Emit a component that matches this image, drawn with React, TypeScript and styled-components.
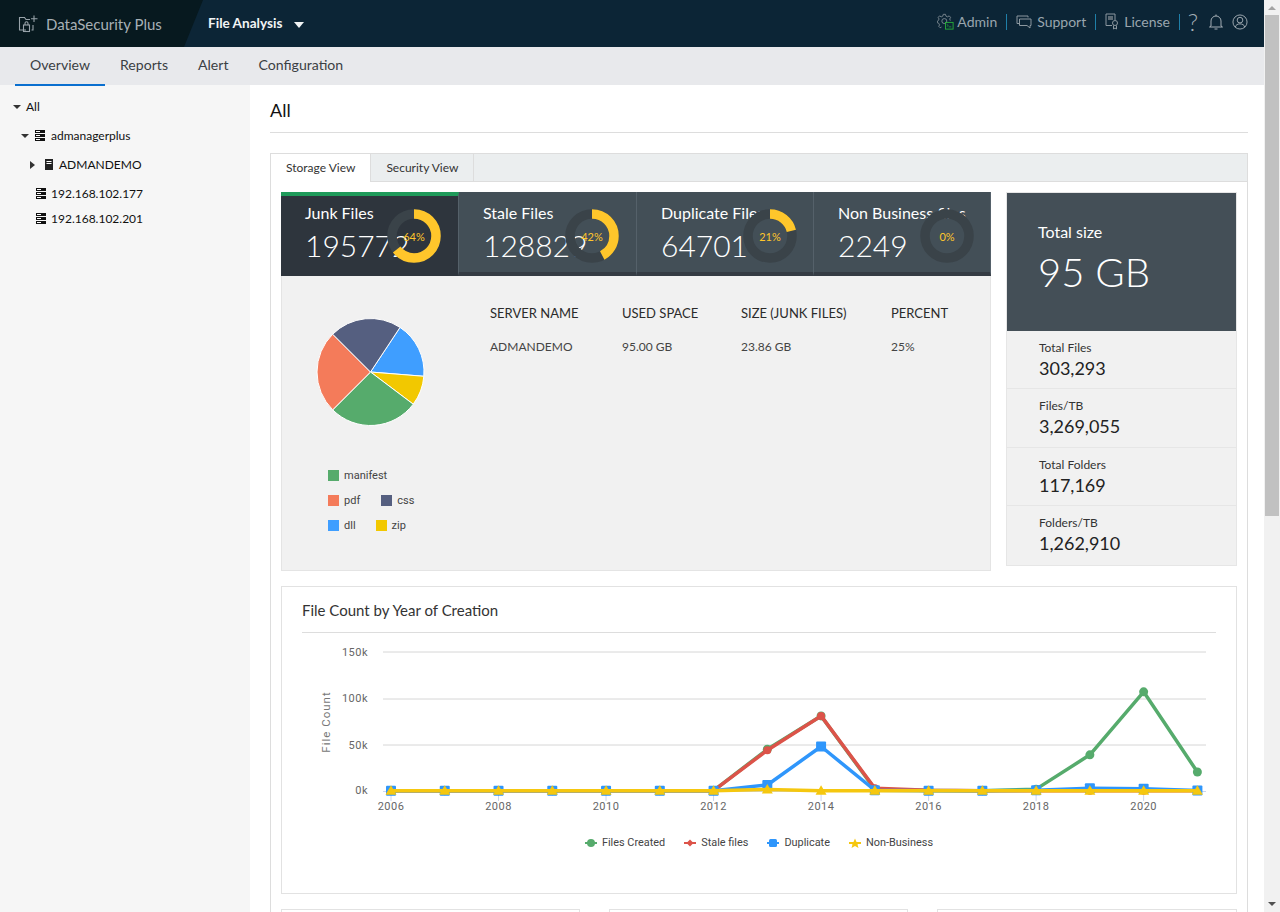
import React from 'react'
import styled, { createGlobalStyle } from 'styled-components'

const GlobalStyle = createGlobalStyle`
	html, body {
		margin: 0;
		height: 100%;
		overflow: hidden;
	}
	body {
		font-family: Lato, 'Liberation Sans', sans-serif;
		color: #222;
	}
	#root {
		height: 912px;
	}
`

const years = Array.from({ length: 16 }, (_, i) => 2006 + i)
const flat = (n: number) => Array.from({ length: n }, () => 0.4)

const series = [
	{ key: 'green', color: '#56ab6c', marker: 'circle', values: [...flat(7), 45, 81, 2, 0.6, 0.4, 2, 39, 107, 20.5] },
	{ key: 'red', color: '#dc5349', marker: 'diamond', values: [...flat(7), 44, 81, 3, 0.8, 0.4, 0.4, 0.4, 0.4, 0.4] },
	{ key: 'blue', color: '#2f96fb', marker: 'square', values: [...flat(7), 6.5, 48, 0.8, 0.4, 0.4, 0.8, 3, 2.4, 0.6] },
	{ key: 'yellow', color: '#f5c70f', marker: 'triangle', values: [...flat(7), 1.6, 0.2, 0.2, 0.3, 0.3, 0.3, 0.3, 0.3, 0.3] },
]

const xAt = (i: number) => 391 + i * 53.76
const yAt = (v: number) => 791 - v * 0.927

const stats = [
	{ title: 'Junk Files', count: '195772', percent: 64, active: true },
	{ title: 'Stale Files', count: '128829', percent: 42, active: false },
	{ title: 'Duplicate Files', count: '64701', percent: 21, active: false },
	{ title: 'Non Business files', count: '2249', percent: 0, active: false },
]

const totals = [
	{ label: 'Total Files', value: '303,293' },
	{ label: 'Files/TB', value: '3,269,055' },
	{ label: 'Total Folders', value: '117,169' },
	{ label: 'Folders/TB', value: '1,262,910' },
]

const pieSlices = [
	{ color: '#3f9eff', from: 33.5, to: 94.6 },
	{ color: '#f2c800', from: 94.6, to: 127 },
	{ color: '#56ab6c', from: 127, to: 225 },
	{ color: '#f47b5a', from: 225, to: 315 },
	{ color: '#555f80', from: 315, to: 393.5 },
]

const piePath = (from: number, to: number) => {
	const point = (deg: number) => {
		const rad = (deg * Math.PI) / 180
		return `${60.5 + 53.5 * Math.sin(rad)} ${60 - 53.5 * Math.cos(rad)}`
	}
	return `M60.5 60 L${point(from)} A53.5 53.5 0 ${to - from > 180 ? 1 : 0} 1 ${point(to)} Z`
}

function Marker({ kind, color, x, y }: { kind: string; color: string; x: number; y: number }) {
	if (kind === 'circle') return <circle cx={x} cy={y} r={4.5} fill={color} />
	if (kind === 'diamond') return <circle cx={x} cy={y} r={4} fill={color} />
	if (kind === 'square') return <rect x={x - 5} y={y - 5} width={10} height={10} rx={1} fill={color} />
	return <path d={`M${x} ${y - 5.5}L${x + 5.5} ${y + 4}H${x - 5.5}Z`} fill={color} />
}

function LegendMark({ kind, color }: { kind: string; color: string }) {
	return (
		<svg width="12" height="12" viewBox="0 0 12 12">
			<rect x="0" y="5" width="12" height="2" fill={color} />
			{kind === 'diamond' ? (
				<path d="M6 2.5L9.5 6L6 9.500L2.500 6Z" fill={color} />
			) : kind === 'star' ? (
				<path d="M6 1.500L7.500 5H11.500L8.500 7.500L9.500 11L6 9L2.500 11L3.500 7.500L0.500 5H4.500Z" fill={color} />
			) : kind === 'square' ? (
				<rect x="2" y="2" width="8" height="8" rx="1.500" fill={color} />
			) : (
				<circle cx="6" cy="6" r="4" fill={color} />
			)}
		</svg>
	)
}

function Donut({ percent, active }: { percent: number; active: boolean }) {
	const length = 2 * Math.PI * 22
	return (
		<DonutWrap $active={active}>
			<svg width="54" height="54" viewBox="0 0 54 54">
				<circle cx="27" cy="27" r="22" fill="none" stroke="#3a4349" strokeWidth="9.500" />
				<circle
					cx="27"
					cy="27"
					r="22"
					fill="none"
					stroke="#ffc62b"
					strokeWidth="9.500"
					strokeDasharray={`${(length * percent) / 100} ${length}`}
					transform="rotate(-90 27 27)"
				/>
			</svg>
			<DonutLabel>{percent}%</DonutLabel>
		</DonutWrap>
	)
}

function ServerIcon() {
	return (
		<svg width="10" height="11" viewBox="0 0 10 11">
			<path d="M0 0H10V3H0ZM0 4H10V7H0ZM0 8H10V11H0Z" fill="#111" />
			<path d="M1 1H5V2H1ZM1 5H5V6H1ZM1 9H5V10H1Z" fill="#fff" />
		</svg>
	)
}

function HostIcon() {
	return (
		<svg width="9" height="11" viewBox="0 0 9 11">
			<path d="M0 0H8V11H0Z" fill="#222" />
			<path d="M1.500 2H6.500V3H1.500ZM1.500 4H6.500V5H1.500Z" fill="#fff" />
		</svg>
	)
}

function App() {
	return (
		<Page>
			<GlobalStyle />
			<Main>
				<Header>
					<Brand>
						<svg width="22" height="20" viewBox="0 0 22 20" fill="none" stroke="#98a3aa" strokeWidth="1.100">
							<path d="M8 16H1.500V3.500H6.500L8 5.500H12" />
							<path d="M15 11V16H13.500" />
							<rect x="5.500" y="11" width="6" height="6.500" />
							<path d="M7 11V9.200A1.500 1.500 0 0 1 10 9.200V11" />
							<path d="M16 1.500V8M13 4.700H19.500" />
						</svg>
						<BrandName>DataSecurity Plus</BrandName>
					</Brand>
					<Product>
						File Analysis
						<ProductCaret />
					</Product>
					<HeaderLinks>
						<HeaderLink $gap={3}>
							<svg width="17" height="17" viewBox="0 0 19 19" fill="none">
								<path
									d="M7 1.500H9.500L10 3.500L11.800 4.300L13.600 3.200L15.200 4.900L14.200 6.700L14.900 8.500M7 1.500L6.500 3.500L4.700 4.300L2.900 3.200L1.300 4.900L2.300 6.700L1.500 8.500L0.500 9V11L2 11.500L2.800 13.300L2 15L3.500 16.500L5 15.700"
									stroke="#7e8b93"
								/>
								<circle cx="8.200" cy="9" r="2.800" stroke="#7e8b93" />
								<rect x="9.500" y="10.500" width="8.500" height="7.500" stroke="#27b03a" />
								<path d="M11 12.500L12.500 14L11 15M13 15.500H16" stroke="#27b03a" strokeWidth="0.800" />
							</svg>
							<HeaderLinkText>Admin</HeaderLinkText>
						</HeaderLink>
						<HeaderSep />
						<HeaderLink>
							<svg width="16" height="16" viewBox="0 0 16 16" fill="none" stroke="#8b979f">
								<path d="M3 9.500H1V2H12V3.500" />
								<path d="M3.500 5H15V11.500H14V14L11 11.500H3.500Z" />
							</svg>
							<HeaderLinkText>Support</HeaderLinkText>
						</HeaderLink>
						<HeaderSep />
						<HeaderLink>
							<svg width="14" height="17" viewBox="0 0 14 17" fill="none" stroke="#8b979f">
								<path d="M7 12.500H1V1H10V7" />
								<path d="M3 3H8V7H3Z" fill="#5d6b75" stroke="none" />
								<circle cx="10" cy="10" r="2.500" />
								<path d="M8.500 12.500V16L10 15L11.500 16V12.500" />
							</svg>
							<HeaderLinkText>License</HeaderLinkText>
						</HeaderLink>
						<HeaderSep />
						<HelpMark>?</HelpMark>
						<svg width="14" height="16" viewBox="0 0 14 16" fill="none" stroke="#a4aeb5">
							<path d="M2 12V7A5 5 0 0 1 12 7V12L13.500 13H0.500Z" />
							<path d="M5.500 15H8.500M7 0.500V2" />
						</svg>
						<svg width="16" height="16" viewBox="0 0 17 17" fill="none" stroke="#a4aeb5">
							<circle cx="8.500" cy="8.500" r="7.500" />
							<circle cx="8.500" cy="6.500" r="3" />
							<path d="M3.500 14C4 11.500 6 10.500 8.500 10.500S13 11.500 13.500 14" />
						</svg>
					</HeaderLinks>
				</Header>
				<Nav>
					<NavItem $active>Overview</NavItem>
					<NavItem>Reports</NavItem>
					<NavItem>Alert</NavItem>
					<NavItem>Configuration</NavItem>
				</Nav>
				<Body>
					<Sidebar>
						<TreeRow $indent={13} $height={29}>
							<CaretDown />
							<TreeLabel>All</TreeLabel>
						</TreeRow>
						<TreeRow $indent={21} $height={29} $gap={6}>
							<CaretDown />
							<ServerIcon />
							<TreeLabel>admanagerplus</TreeLabel>
						</TreeRow>
						<TreeRow $indent={30} $height={29}>
							<CaretRight />
							<HostIcon />
							<TreeLabel>ADMANDEMO</TreeLabel>
						</TreeRow>
						<TreeRow $indent={36} $height={29}>
							<ServerIcon />
							<TreeLabel>192.168.102.177</TreeLabel>
						</TreeRow>
						<TreeRow $indent={36} $height={20}>
							<ServerIcon />
							<TreeLabel>192.168.102.201</TreeLabel>
						</TreeRow>
					</Sidebar>
					<Content>
						<PageTitle>All</PageTitle>
						<TabBox>
							<TabStrip>
								<Tab $active>Storage View</Tab>
								<Tab>Security View</Tab>
							</TabStrip>
							<TabBody>
								<TopRow>
									<Overview>
										<StatRow>
											{stats.map((s) => (
												<StatCard key={s.title} $active={s.active}>
													<StatTitle>{s.title}</StatTitle>
													<StatCount>{s.count}</StatCount>
													<Donut percent={s.percent} active={s.active} />
												</StatCard>
											))}
										</StatRow>
										<Breakdown>
											<PieColumn>
												<svg width="120" height="120" viewBox="0 0 120 120">
													{pieSlices.map((p) => (
														<path key={p.color} d={piePath(p.from, p.to)} fill={p.color} stroke="#fff" strokeWidth="1" />
													))}
												</svg>
												<PieLegend>
													<PieLegendRow $gap={20}>
														<PieLegendItem>
															<Swatch $color="#56ab6c" />
															manifest
														</PieLegendItem>
													</PieLegendRow>
													<PieLegendRow $gap={21}>
														<PieLegendItem>
															<Swatch $color="#f47b5a" />
															pdf
														</PieLegendItem>
														<PieLegendItem>
															<Swatch $color="#555f80" />
															css
														</PieLegendItem>
													</PieLegendRow>
													<PieLegendRow $gap={20}>
														<PieLegendItem>
															<Swatch $color="#3f9eff" />
															dll
														</PieLegendItem>
														<PieLegendItem>
															<Swatch $color="#f2c800" />
															zip
														</PieLegendItem>
													</PieLegendRow>
												</PieLegend>
											</PieColumn>
											<ServerTable>
												<thead>
													<tr>
														<HeadCell $width={132}>SERVER NAME</HeadCell>
														<HeadCell $width={119}>USED SPACE</HeadCell>
														<HeadCell $width={150}>SIZE (JUNK FILES)</HeadCell>
														<HeadCell>PERCENT</HeadCell>
													</tr>
												</thead>
												<tbody>
													<tr>
														<BodyCell>ADMANDEMO</BodyCell>
														<BodyCell>95.00 GB</BodyCell>
														<BodyCell>23.86 GB</BodyCell>
														<BodyCell>25%</BodyCell>
													</tr>
												</tbody>
											</ServerTable>
										</Breakdown>
									</Overview>
									<Totals>
										<TotalHero>
											<TotalHeroLabel>Total size</TotalHeroLabel>
											<TotalHeroValue>95 GB</TotalHeroValue>
										</TotalHero>
										{totals.map((t) => (
											<TotalRow key={t.label}>
												<TotalLabel>{t.label}</TotalLabel>
												<TotalValue>{t.value}</TotalValue>
											</TotalRow>
										))}
									</Totals>
								</TopRow>
								<ChartCard>
									<ChartTitle>File Count by Year of Creation</ChartTitle>
									<ChartSvg viewBox="302 640 914 180" width="914" height="180">
										{[652, 699, 745].map((y) => (
											<line key={y} x1="383" x2="1206" y1={y} y2={y} stroke="#d6d6d6" />
										))}
										<line x1="383" x2="1206" y1="791.500" y2="791.500" stroke="#ccd6eb" />
										{[
											['150k', 656],
											['100k', 702],
											['50k', 749],
											['0k', 794],
										].map(([label, y]) => (
											<AxisText key={label} x="368" y={y} textAnchor="end">
												{label}
											</AxisText>
										))}
										<AxisTitle x="0" y="0" textAnchor="middle" transform="translate(330 722) rotate(-90)">
											File Count
										</AxisTitle>
										{years
											.filter((y) => y % 2 === 0)
											.map((y) => (
												<g key={y}>
													<line x1={xAt(y - 2006)} x2={xAt(y - 2006)} y1="791" y2="801" stroke="#ccd6eb" />
													<AxisText x={xAt(y - 2006)} y="810" textAnchor="middle">
														{y}
													</AxisText>
												</g>
											))}
										{series.map((s) => (
											<g key={s.key}>
												<polyline
													fill="none"
													stroke={s.color}
													strokeWidth="3.500"
													strokeLinejoin="round"
													points={s.values.map((v, i) => `${xAt(i)},${yAt(v)}`).join(' ')}
												/>
												{s.values.map((v, i) => (
													<Marker key={i} kind={s.marker} color={s.color} x={xAt(i)} y={yAt(v)} />
												))}
											</g>
										))}
									</ChartSvg>
									<ChartLegend>
										<ChartLegendItem>
											<LegendMark kind="circle" color="#56ab6c" />
											Files Created
										</ChartLegendItem>
										<ChartLegendItem>
											<LegendMark kind="diamond" color="#dc5349" />
											Stale files
										</ChartLegendItem>
										<ChartLegendItem>
											<LegendMark kind="square" color="#2f96fb" />
											Duplicate
										</ChartLegendItem>
										<ChartLegendItem>
											<LegendMark kind="star" color="#f5c70f" />
											Non-Business
										</ChartLegendItem>
									</ChartLegend>
								</ChartCard>
								<BottomRow>
									<BottomCard />
									<BottomCard />
									<BottomCard />
								</BottomRow>
							</TabBody>
						</TabBox>
					</Content>
				</Body>
			</Main>
			<ScrollTrack>
				<ScrollUp />
				<ScrollThumb />
				<ScrollDown />
			</ScrollTrack>
		</Page>
	)
}

const Page = styled.div`
	display: flex;
	height: 912px;
	overflow: hidden;
`

const Main = styled.div`
	flex: 1;
	min-width: 0;
	display: flex;
	flex-direction: column;
	overflow: hidden;
`

const Header = styled.header`
	flex: none;
	height: 47px;
	display: flex;
	align-items: center;
	background: #0c2536;
`

const Brand = styled.div`
	width: 203px;
	height: 100%;
	box-sizing: border-box;
	padding-left: 18px;
	display: flex;
	align-items: center;
	gap: 6px;
	background: #07191f;
	clip-path: polygon(0 0, 100% 0, 184px 100%, 0 100%);
`

const BrandName = styled.span`
	font-size: 15px;
	color: #a7b0b6;
`

const Product = styled.div`
	margin-left: 5px;
	padding-bottom: 2px;
	display: flex;
	align-items: center;
	font-size: 13.600px;
	font-weight: 700;
	color: #f1f4f5;
`

const ProductCaret = styled.span`
	margin-left: 12px;
	margin-top: 5px;
	border-left: 5px solid transparent;
	border-right: 5px solid transparent;
	border-top: 6px solid #f1f4f5;
`

const HeaderLinks = styled.div`
	margin-left: auto;
	padding: 0 16px 4px 0;
	display: flex;
	align-items: center;
	gap: 9px;
`

const HeaderLink = styled.div<{ $gap?: number }>`
	display: flex;
	align-items: center;
	gap: ${(props) => props.$gap ?? 5}px;
`

const HeaderLinkText = styled.span`
	font-size: 14px;
	color: #9aa6ae;
`

const HeaderSep = styled.span`
	width: 1px;
	height: 16px;
	background: #1f7fa8;
`

const HelpMark = styled.span`
	width: 8px;
	margin-right: 3px;
	display: flex;
	justify-content: center;
	font-size: 24px;
	line-height: 24px;
	font-weight: 300;
	color: #a4aeb5;
`

const Nav = styled.nav`
	flex: none;
	height: 38px;
	display: flex;
	padding-left: 15px;
	background: #e8e9ec;
`

const NavItem = styled.a<{ $active?: boolean }>`
	position: relative;
	z-index: 1;
	height: 37px;
	padding: 0 15px;
	line-height: 36px;
	font-size: 14.100px;
	color: #3b3f44;
	border-bottom: 2px solid ${(props) => (props.$active ? '#0a6fcf' : 'transparent')};
`

const Body = styled.div`
	flex: 1;
	min-height: 0;
	display: flex;
`

const Sidebar = styled.aside`
	flex: none;
	width: 250px;
	padding-top: 7px;
	background: #f6f6f6;
`

const TreeRow = styled.div<{ $indent: number; $height: number; $gap?: number }>`
	display: flex;
	align-items: center;
	height: ${(props) => props.$height}px;
	padding-left: ${(props) => props.$indent}px;
	gap: ${(props) => props.$gap ?? 5}px;
`

const CaretDown = styled.span`
	border-left: 4px solid transparent;
	border-right: 4px solid transparent;
	border-top: 4px solid #333;
`

const CaretRight = styled.span`
	margin-right: 5px;
	border-top: 4px solid transparent;
	border-bottom: 4px solid transparent;
	border-left: 5px solid #333;
`

const TreeLabel = styled.span`
	font-size: 12px;
	color: #111;
`

const Content = styled.main`
	flex: 1;
	min-width: 0;
	padding: 0 16px 0 20px;
	overflow: hidden;
`

const PageTitle = styled.h1`
	margin: 0 0 20px;
	height: 47px;
	line-height: 50px;
	font-size: 18px;
	font-weight: 400;
	color: #111;
	border-bottom: 1px solid #ddd;
`

const TabBox = styled.section`
	border: 1px solid #ddd;
`

const TabStrip = styled.div`
	display: flex;
	height: 27px;
	background: #ebeeef;
	border-bottom: 1px solid #ddd;
`

const Tab = styled.div<{ $active?: boolean }>`
	box-sizing: border-box;
	height: ${(props) => (props.$active ? 28 : 27)}px;
	padding: 0 15px;
	line-height: 27px;
	font-size: 12px;
	color: #333;
	background: ${(props) => (props.$active ? '#fff' : 'transparent')};
	border-right: 1px solid #ddd;
`

const TabBody = styled.div`
	padding: 10px 10px 0;
`

const TopRow = styled.div`
	display: flex;
	gap: 15px;
	align-items: flex-start;
`

const Overview = styled.div`
	width: 710px;
`

const StatRow = styled.div`
	display: grid;
	grid-template-columns: 178px 178px 177px 177px;
	height: 84px;
	background: #434f57;
`

const StatCard = styled.div<{ $active?: boolean }>`
	position: relative;
	box-sizing: border-box;
	height: 84px;
	padding: ${(props) => (props.$active ? 7 : 11)}px 0 0 24px;
	overflow: hidden;
	background: ${(props) => (props.$active ? '#2e353d' : '#434f57')};
	border-top: ${(props) => (props.$active ? '4px solid #1f9a5a' : 'none')};
	border-bottom: 4px solid ${(props) => (props.$active ? '#2e353d' : '#353c44')};
	border-right: 1px solid #55616a;
`

const StatTitle = styled.div`
	font-size: 16px;
	line-height: 20px;
	color: #fff;
	white-space: nowrap;
`

const StatCount = styled.div`
	margin-top: 3px;
	font-size: 30px;
	line-height: 38px;
	font-weight: 300;
	color: #fff;
`

const DonutWrap = styled.div<{ $active?: boolean }>`
	position: absolute;
	left: 106px;
	top: ${(props) => (props.$active ? 13 : 17)}px;
	width: 54px;
	height: 54px;
`

const DonutLabel = styled.span`
	position: absolute;
	inset: 0;
	display: flex;
	align-items: center;
	justify-content: center;
	font-size: 11px;
	color: #ffc62b;
`

const Breakdown = styled.div`
	box-sizing: border-box;
	height: 295px;
	display: flex;
	background: #f1f1f1;
	border: 1px solid #e4e4e4;
	border-top: none;
`

const PieColumn = styled.div`
	flex: none;
	width: 208px;
	padding: 36px 0 0 28px;
	box-sizing: border-box;
`

const PieLegend = styled.div`
	margin: 33px 0 0 18px;
	display: flex;
	flex-direction: column;
	gap: 11px;
`

const PieLegendRow = styled.div<{ $gap: number }>`
	display: flex;
	gap: ${(props) => props.$gap}px;
`

const PieLegendItem = styled.div`
	display: flex;
	align-items: center;
	gap: 5px;
	height: 14px;
	font-family: Roboto, sans-serif;
	font-size: 11px;
	color: #444;
`

const Swatch = styled.span<{ $color: string }>`
	width: 11px;
	height: 11px;
	background: ${(props) => props.$color};
`

const ServerTable = styled.table`
	height: fit-content;
	margin-top: 20px;
	border-collapse: collapse;
`

const HeadCell = styled.th<{ $width?: number }>`
	width: ${(props) => (props.$width ? `${props.$width}px` : 'auto')};
	padding: 0;
	height: 33px;
	text-align: left;
	font-size: 13px;
	font-weight: 400;
	color: #2b2b2b;
`

const BodyCell = styled.td`
	height: 35px;
	padding: 0;
	font-size: 12px;
	color: #444;
`

const Totals = styled.div`
	flex: none;
	width: 231px;
	box-sizing: border-box;
	background: #f1f1f1;
	border: 1px solid #e6e6e6;
`

const TotalHero = styled.div`
	height: 138px;
	box-sizing: border-box;
	padding: 29px 0 0 31px;
	background: #444f57;
	color: #fff;
`

const TotalHeroLabel = styled.div`
	font-size: 16px;
	line-height: 20px;
`

const TotalHeroValue = styled.div`
	margin-top: 5px;
	font-size: 40px;
	line-height: 50px;
	font-weight: 300;
`

const TotalRow = styled.div`
	height: 58.400px;
	box-sizing: border-box;
	padding: 9px 0 0 32px;
	border-bottom: 1px solid #e6e6e6;

	&:last-child {
		border-bottom: none;
	}
`

const TotalLabel = styled.div`
	font-size: 12px;
	line-height: 16px;
	color: #333;
`

const TotalValue = styled.div`
	font-size: 18px;
	line-height: 24px;
	color: #222;
`

const ChartCard = styled.div`
	box-sizing: border-box;
	height: 308px;
	margin-top: 15px;
	padding: 0 20px;
	border: 1px solid #e2e2e2;
`

const ChartTitle = styled.h2`
	margin: 0;
	height: 45px;
	line-height: 47px;
	font-size: 15px;
	font-weight: 400;
	color: #333;
	border-bottom: 1px solid #ddd;
`

const ChartSvg = styled.svg`
	display: block;
	margin-top: 7px;
`

const AxisText = styled.text`
	font-family: Roboto, sans-serif;
	font-size: 11px;
	letter-spacing: 0.500px;
	fill: #666;
`

const AxisTitle = styled.text`
	font-family: Roboto, sans-serif;
	font-size: 11.500px;
	letter-spacing: 1px;
	fill: #777;
`

const ChartLegend = styled.div`
	margin-top: 16px;
	display: flex;
	justify-content: center;
	gap: 19px;
`

const ChartLegendItem = styled.div`
	display: flex;
	align-items: center;
	gap: 5px;
	font-family: Roboto, sans-serif;
	font-size: 10.900px;
	color: #444;
`

const BottomRow = styled.div`
	margin-top: 15px;
	display: grid;
	grid-template-columns: 299px 299px 300px;
	gap: 29px;
`

const BottomCard = styled.div`
	height: 200px;
	border: 1px solid #e2e2e2;
`

const ScrollTrack = styled.div`
	flex: none;
	width: 16px;
	display: flex;
	flex-direction: column;
	align-items: center;
	background: #f1f1f1;
`

const ScrollUp = styled.span`
	margin: 6px 0 5px;
	border-left: 4px solid transparent;
	border-right: 4px solid transparent;
	border-bottom: 4px solid #a3a3a3;
`

const ScrollThumb = styled.div`
	width: 14px;
	height: 501px;
	background: #c1c1c1;
`

const ScrollDown = styled.span`
	margin-top: auto;
	margin-bottom: 6px;
	border-left: 4px solid transparent;
	border-right: 4px solid transparent;
	border-top: 4px solid #505050;
`

export default App
